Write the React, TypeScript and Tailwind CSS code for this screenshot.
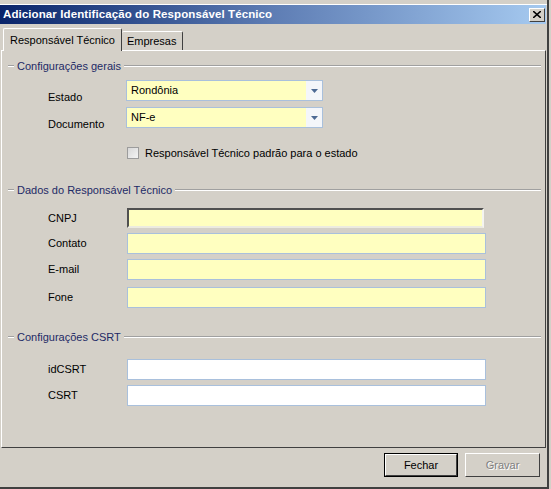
import React from 'react';

const font = { fontFamily: '"Liberation Sans", Arial, sans-serif' };

function GroupHeader({ title }: { title: string }) {
  return (
    <div className="flex items-center h-[14px] pl-[6px] pr-[4px]">
      <div className="w-[6px] border-t border-[#a0a0a0] border-b border-b-white" />
      <span className="px-[3px] text-[11px] leading-[14px] text-[#1e2a66] whitespace-nowrap">{title}</span>
      <div className="flex-1 border-t border-[#a0a0a0] border-b border-b-white" />
    </div>
  );
}

function ComboBox({ value }: { value: string }) {
  return (
    <div className="flex w-[197px] h-[21px] border border-[#a9c0dc] bg-[#ffffc0]">
      <div className="flex-1 flex items-center pl-[4px] text-[11px] text-black">{value}</div>
      <div className="w-[16px] flex items-center justify-center bg-[#f4f6fa]">
        <svg width="7" height="4" viewBox="0 0 7 4">
          <path d="M0 0h7L3.5 4z" fill="#4d6a94" />
        </svg>
      </div>
    </div>
  );
}

function TextRow({ label, white, sunken, mt }: { label: string; white?: boolean; sunken?: boolean; mt: string }) {
  return (
    <div className={`flex items-center ${mt}`}>
      <div className="w-[125px] pl-[46px] text-[11px] text-black">{label}</div>
      {sunken ? (
        <div className="w-[357px] h-[20px] border-2 border-t-[#505050] border-l-[#505050] border-r-[#f4f4f0] border-b-[#ecebe0] bg-[#ffffc0]" />
      ) : (
        <div className={`w-[359px] h-[21px] border border-[#a9c0dc] ${white ? 'bg-white' : 'bg-[#ffffc0]'}`} />
      )}
    </div>
  );
}

export default function App() {
  return (
    <div className="w-[551px] h-[489px] bg-[#d4d0c8] overflow-hidden" style={font}>
      <div className="h-[489px] w-[549px] border-r-2 border-r-[#404040] flex flex-col">
        <div className="h-[5px] border-b border-b-white" />
        {/* title bar */}
        <div className="h-[19px] w-[546px] bg-gradient-to-r from-[#0a246a] via-[#5e7db4] to-[#a6caf0] flex items-center justify-between pl-[3px] pr-[1px]">
          <span className="text-white font-bold text-[11.5px] tracking-[0.1px]">Adicionar Identificação do Responsável Técnico</span>
          <div className="w-[16px] h-[14px] bg-[#d4d0c8] border border-t-white border-l-white border-r-[#404040] border-b-[#404040] flex items-center justify-center">
            <svg width="8" height="7" viewBox="0 0 8 7">
              <path d="M0 0L8 7M8 0L0 7" stroke="#000" strokeWidth="1.6" />
            </svg>
          </div>
        </div>
        {/* tabs */}
        <div className="flex items-end h-[22px] pl-[3px] mt-[4px]">
          <div className="h-[23px] px-[6px] flex items-center bg-[#d4d0c8] border-t border-l border-t-white border-l-white border-r border-r-[#404040] rounded-t-[2px] text-[11px] text-black relative -mb-[1px] z-10">
            Responsável Técnico
          </div>
          <div className="h-[19px] px-[5px] flex items-center border-t border-r border-t-white border-r-[#404040] rounded-t-[2px] text-[11px] text-black">
            Empresas
          </div>
        </div>
        {/* panel */}
        <div className="h-[398px] w-[545px] ml-[1px] border-t border-l border-t-white border-l-white border-r border-b border-r-[#404040] border-b-[#404040] flex flex-col">
          <div className="mt-[8px]">
            <GroupHeader title="Configurações gerais" />
          </div>
          <div className="flex items-start h-[21px] mt-[7px]">
            <div className="w-[124px] pl-[46px] pt-[11px] leading-[13px] text-[11px] text-black">Estado</div>
            <ComboBox value="Rondônia" />
          </div>
          <div className="flex items-start h-[21px] mt-[6px]">
            <div className="w-[124px] pl-[46px] pt-[11px] leading-[13px] text-[11px] text-black">Documento</div>
            <ComboBox value="NF-e" />
          </div>
          <div className="flex items-center h-[14px] mt-[18px] pl-[125px] gap-[6px]">
            <div className="w-[12px] h-[12px] border border-[#9c9c9c] bg-gradient-to-br from-[#d8d8d8] to-[#f4f4f4]" />
            <span className="text-[11px] text-black">Responsável Técnico padrão para o estado</span>
          </div>
          <div className="mt-[23px]">
            <GroupHeader title="Dados do Responsável Técnico" />
          </div>
          <TextRow label="CNPJ" sunken mt="mt-[11px]" />
          <TextRow label="Contato" mt="mt-[5px]" />
          <TextRow label="E-mail" mt="mt-[5px]" />
          <TextRow label="Fone" mt="mt-[7px]" />
          <div className="mt-[22px]">
            <GroupHeader title="Configurações CSRT" />
          </div>
          <TextRow label="idCSRT" white mt="mt-[15px]" />
          <TextRow label="CSRT" white mt="mt-[5px]" />
        </div>
        {/* buttons */}
        <div className="flex justify-end gap-[7px] pr-[7px] mt-[5px]">
          <div className="w-[74px] h-[24px] border border-black">
            <div className="w-full h-full border border-t-white border-l-white border-r-[#404040] border-b-[#404040] flex items-center justify-center text-[11px] text-black">
              Fechar
            </div>
          </div>
          <div className="w-[75px] h-[24px] border border-t-white border-l-white border-r-[#404040] border-b-[#404040] flex items-center justify-center text-[11px] text-[#808080] [text-shadow:1px_1px_0_#ffffff]">
            Gravar
          </div>
        </div>
        <div className="flex-1" />
        <div className="h-[2px] border-t-2 border-t-[#404040]" />
      </div>
    </div>
  );
}
